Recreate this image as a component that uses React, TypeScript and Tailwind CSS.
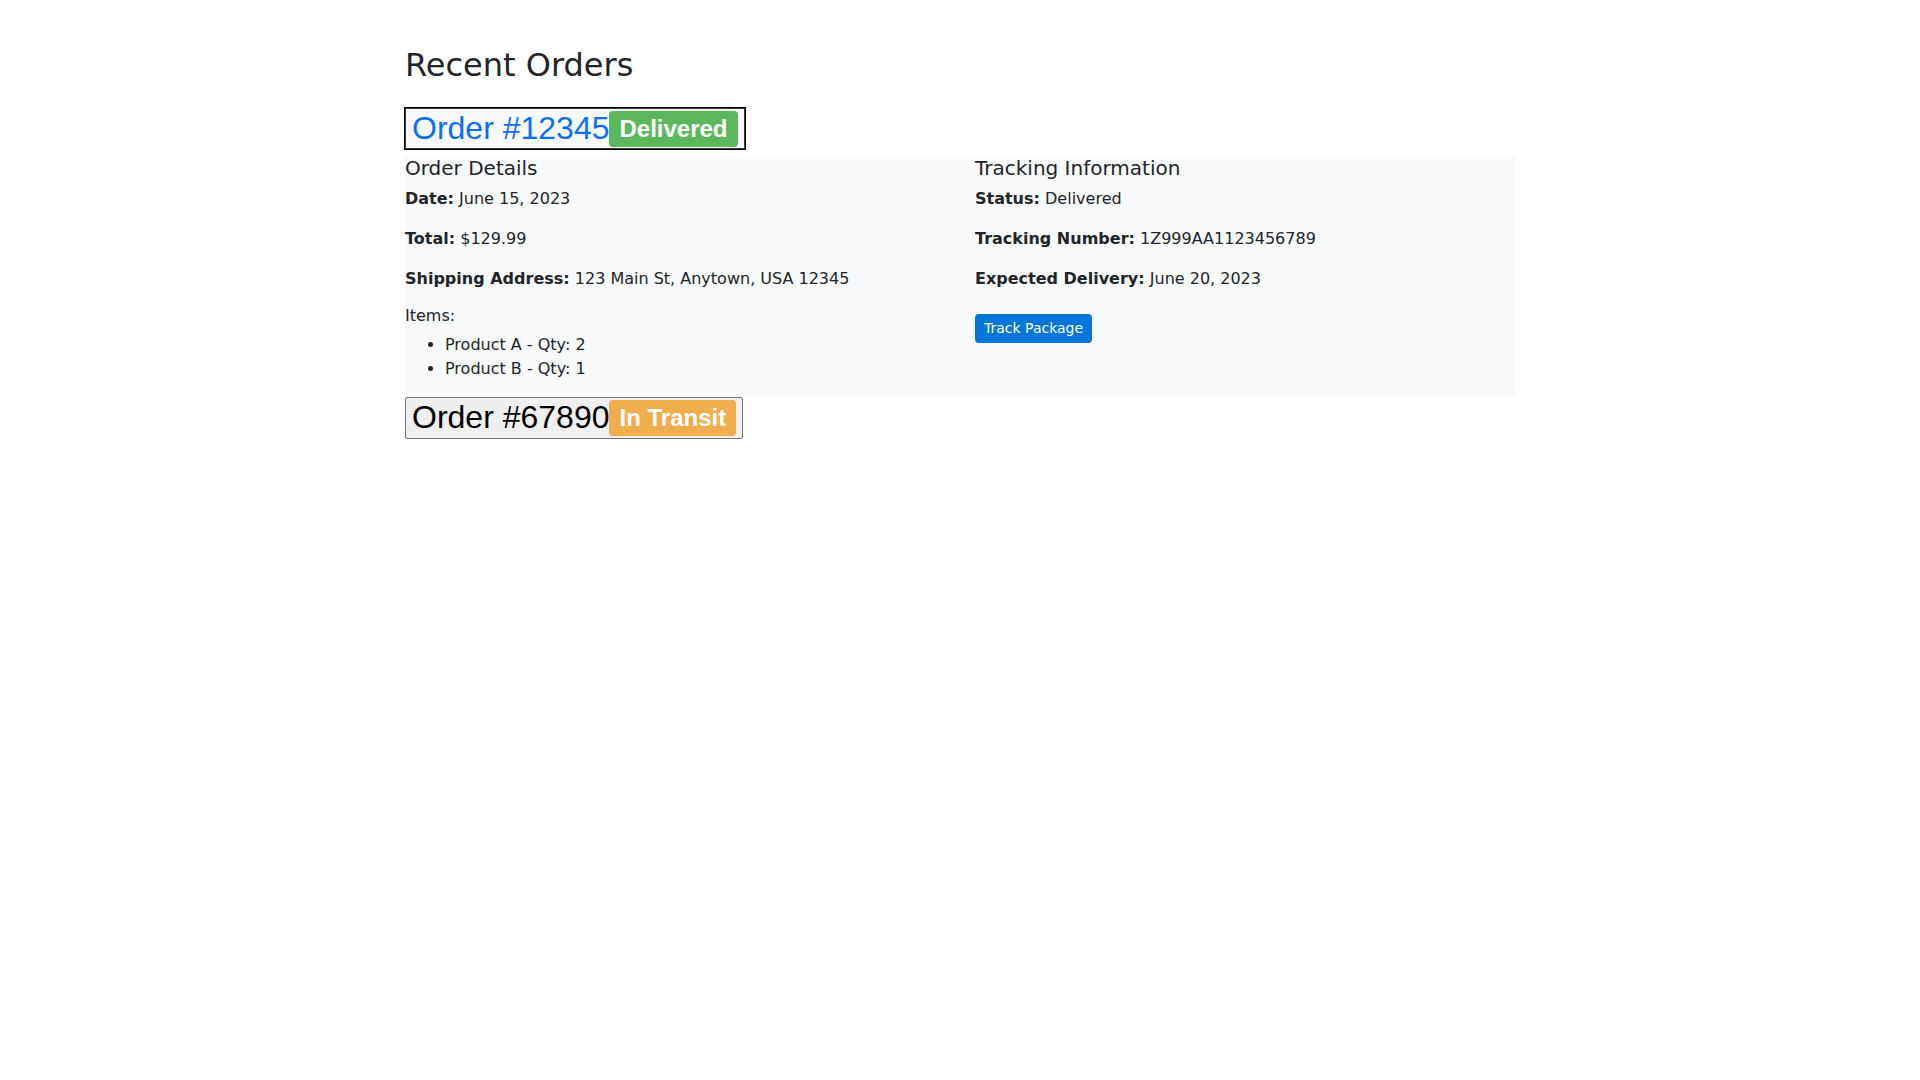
import React from 'react';

interface OrderButtonProps {
  id: string;
  status: string;
  badgeClass: string;
  active?: boolean;
}

const OrderButton: React.FC<OrderButtonProps> = ({ id, status, badgeClass, active }) => {
  return (
    <button
      className={
        active
          ? 'inline-flex items-center px-[6px] py-[1px] border border-[#3a3a3a] outline outline-black bg-[#f8f9fa] text-[#0d6efd] text-[32px] leading-[37px] font-["Liberation_Sans",Arial,sans-serif] mb-2'
          : 'inline-flex items-center px-[6px] py-[1px] border border-[#767676] rounded-[2px] bg-[#efefef] text-black text-[32px] leading-[37.5px] font-["Liberation_Sans",Arial,sans-serif]'
      }
    >
      <span>Order #{id}</span>
      <span className={`${badgeClass} text-white text-[24px] font-bold leading-none px-[10px] py-[6px] rounded-[4px]`}>
        {status}
      </span>
    </button>
  );
};

const Field: React.FC<{ label: string; value: string }> = ({ label, value }) => (
  <p className="text-base leading-6 mb-4">
    <strong className="font-bold">{label}:</strong> {value}
  </p>
);

const App: React.FC = () => {
  return (
    <div className="min-h-screen bg-white text-[#212529] font-['DejaVu_Sans','Noto_Sans',sans-serif]">
      <div className="max-w-[1140px] mx-auto px-[15px] pt-[46px]">
        <h2 className="text-[32px] leading-[38.4px] font-normal mb-6">Recent Orders</h2>

        {/* Order 1 - expanded */}
        <div>
          <OrderButton id="12345" status="Delivered" badgeClass="bg-[#5cb85c]" active />
        </div>
        <div className="bg-[#f8f9fa] grid grid-cols-2 gap-x-[30px]">
          <div>
            <h5 className="text-[20px] leading-[22px] font-normal mb-[8px]">Order Details</h5>
            <Field label="Date" value="June 15, 2023" />
            <Field label="Total" value="$129.99" />
            <p className="text-base leading-6 mb-[15px]">
              <strong className="font-bold">Shipping Address:</strong> 123 Main St, Anytown, USA 12345
            </p>
            <h6 className="text-base leading-[19px] font-normal mb-[8px]">Items:</h6>
            <ul className="list-disc pl-10 mb-[16px] text-base leading-6">
              <li>Product A - Qty: 2</li>
              <li>Product B - Qty: 1</li>
            </ul>
          </div>
          <div>
            <h5 className="text-[20px] leading-[22px] font-normal mb-[8px]">Tracking Information</h5>
            <Field label="Status" value="Delivered" />
            <Field label="Tracking Number" value="1Z999AA1123456789" />
            <Field label="Expected Delivery" value="June 20, 2023" />
            <button className="mt-[7px] px-[9px] py-[6px] bg-[#0275d8] text-white text-[14px] leading-[17px] rounded-[4px]">
              Track Package
            </button>
          </div>
        </div>

        {/* Order 2 - collapsed */}
        <div>
          <OrderButton id="67890" status="In Transit" badgeClass="bg-[#f0ad4e]" />
        </div>
      </div>
    </div>
  );
};

export default App;
